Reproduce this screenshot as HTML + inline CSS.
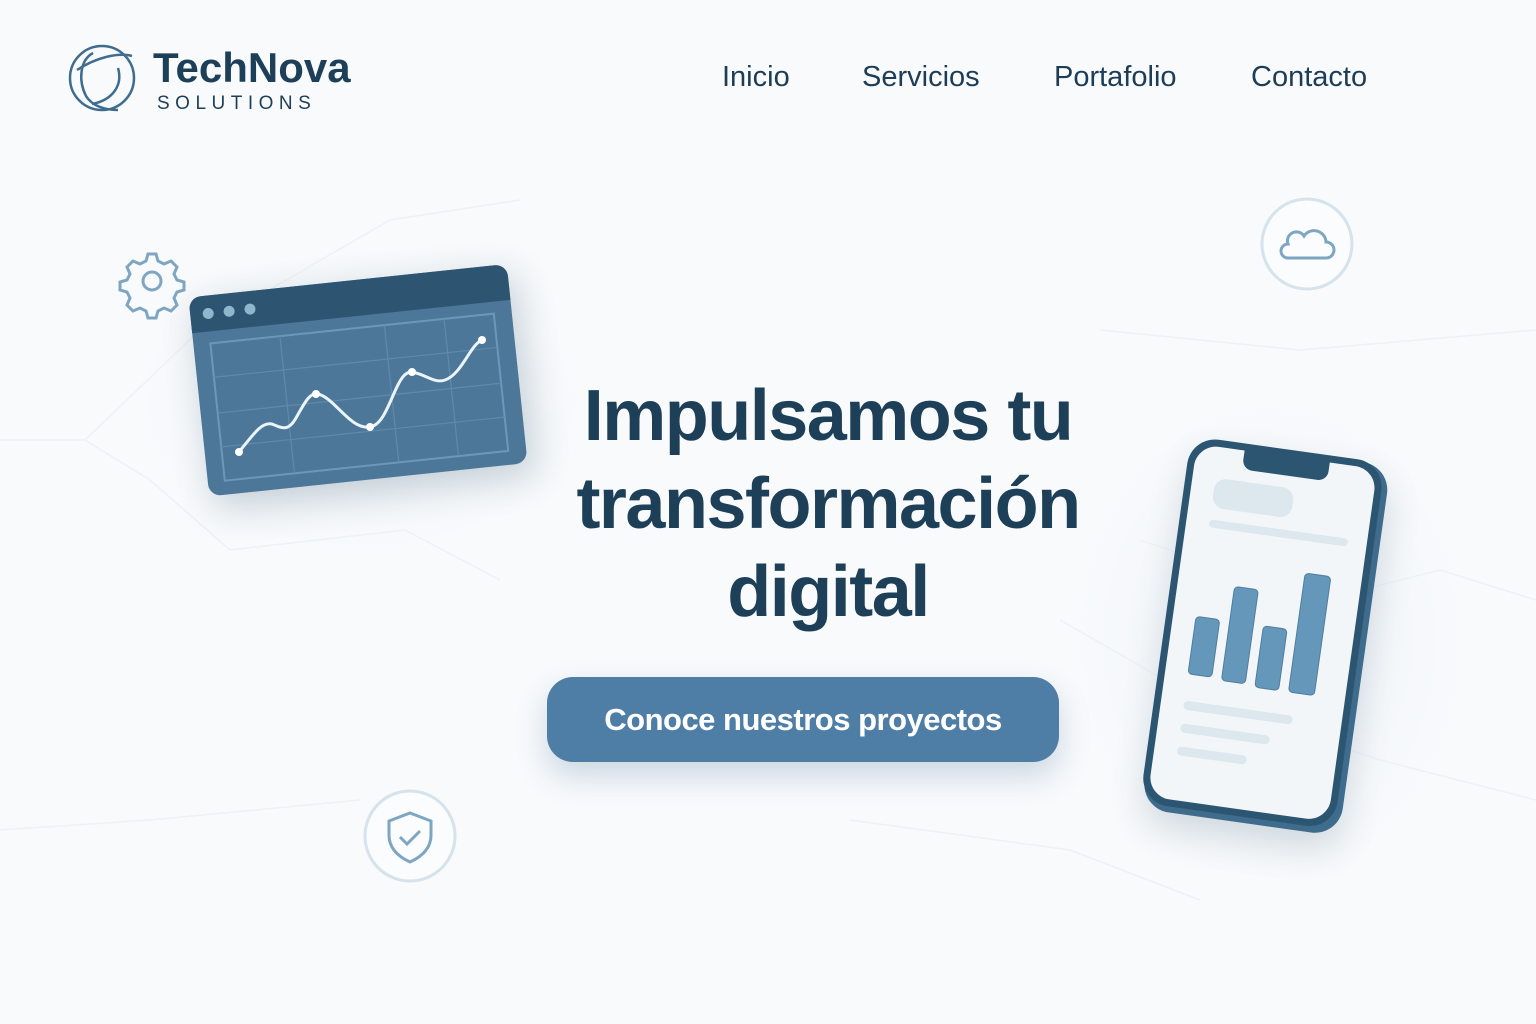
<!DOCTYPE html>
<html><head><meta charset="utf-8"><style>
html,body{margin:0;padding:0}
body{width:1536px;height:1024px;position:relative;overflow:hidden;background:#f8fafc;font-family:"Liberation Sans",sans-serif;color:#1d3d57}
svg.bg{position:absolute;left:0;top:0}
.nav{position:absolute;top:61px;font-size:29px;color:#1d3d57}
.logo1{position:absolute;left:153px;top:44px;font-size:42px;font-weight:bold;letter-spacing:0px;color:#1e3f58}
.logo2{position:absolute;left:157px;top:93px;font-size:19px;letter-spacing:5.5px;color:#1e3f58}
h1{position:absolute;left:500px;width:656px;top:372px;margin:0;text-align:center;font-size:72px;line-height:88px;font-weight:bold;color:#1e3f58;letter-spacing:-1.5px}
.btn{position:absolute;left:547px;top:677px;width:512px;height:85px;border-radius:26px;background:#4e7ea6;color:#fff;font-size:31px;font-weight:bold;letter-spacing:-0.5px;line-height:85px;text-align:center;box-shadow:0 14px 30px rgba(70,110,150,.25)}
</style></head><body>
<svg class="bg" width="1536" height="1024">
<defs>
<radialGradient id="g" cx="50%" cy="50%" r="50%"><stop offset="0" stop-color="#e6eef4"/><stop offset="1" stop-color="#f8fafc" stop-opacity="0"/></radialGradient>
<filter id="b" x="-50%" y="-50%" width="200%" height="200%"><feGaussianBlur stdDeviation="18"/></filter>
</defs>
<ellipse cx="360" cy="400" rx="260" ry="180" fill="url(#g)"/>
<ellipse cx="1270" cy="640" rx="230" ry="280" fill="url(#g)"/>
<g stroke="#edf2f6" stroke-width="1.5" fill="none">
<path d="M0 440 L85 440 L150 480 L230 550 L405 530 L500 580"/>
<path d="M85 440 L200 330 L390 220 L520 200"/>
<path d="M1100 330 L1300 350 L1536 330"/>
<path d="M1140 540 L1320 600 L1440 570 L1536 600"/>
<path d="M1060 620 L1200 700 L1380 760 L1536 800"/>
<path d="M0 830 L150 820 L360 800"/>
<path d="M850 820 L1070 850 L1200 900"/>
</g>
<!-- window -->
<g transform="translate(360,380) rotate(-6)">
<rect x="-158" y="-90" width="324" height="204" rx="12" fill="#21455f" opacity=".22" filter="url(#b)"/>
<rect x="-162" y="-100" width="320" height="200" rx="12" fill="#4c7799"/>
<path d="M-162 -88 a12 12 0 0 1 12 -12 h296 a12 12 0 0 1 12 12 v24 h-320z" fill="#2d5572"/>
<circle cx="-144" cy="-82" r="5.5" fill="#8fb6cd"/><circle cx="-123" cy="-82" r="5.5" fill="#8fb6cd"/><circle cx="-102" cy="-82" r="5.5" fill="#8fb6cd"/>
<rect x="-145" y="-52" width="285" height="138" fill="none" stroke="#6d97b6" stroke-width="2"/>
<g stroke="#5f8aab" stroke-width="1.2"><line x1="-145" y1="-18" x2="140" y2="-18"/><line x1="-145" y1="18" x2="140" y2="18"/><line x1="-145" y1="52" x2="140" y2="52"/><line x1="-75" y1="-52" x2="-75" y2="86"/><line x1="30" y1="-52" x2="30" y2="86"/><line x1="90" y1="-52" x2="90" y2="86"/></g>
</g>
<path d="M239 452 C255 432 262 422 272 424 C282 428 288 432 296 418 C305 402 310 392 318 394 C335 398 350 430 370 427 C390 424 395 370 412 372 C425 374 435 384 445 380 C462 374 470 345 482 340" fill="none" stroke="#eaf4fb" stroke-width="3"/>
<g fill="#fff"><circle cx="239" cy="452" r="4"/><circle cx="316" cy="394" r="4"/><circle cx="370" cy="427" r="4"/><circle cx="412" cy="372" r="4"/><circle cx="482" cy="340" r="4"/></g>
<!-- gear -->
<g transform="translate(152,281)" fill="none" stroke="#7ea6c2" stroke-width="3">
<path d="M-4 -27 h8 l2 7 l6 3 l7 -3 l6 6 l-3 7 l3 6 l7 2 v8 l-7 2 l-3 6 l3 7 l-6 6 l-7 -3 l-6 3 l-2 7 h-8 l-2 -7 l-6 -3 l-7 3 l-6 -6 l3 -7 l-3 -6 l-7 -2 v-8 l7 -2 l3 -6 l-3 -7 l6 -6 l7 3 l6 -3z"/>
<circle r="9"/></g>
<!-- cloud -->
<circle cx="1307" cy="244" r="45" fill="#fafcfd" stroke="#d5e3ec" stroke-width="3"/>
<path d="M1288 258 h38 a8 8 0 0 0 0 -16 a12 12 0 0 0 -22 -6 a9 9 0 0 0 -16 8 a7 7 0 0 0 0 14z" fill="none" stroke="#7ea6c2" stroke-width="3"/>
<!-- shield -->
<circle cx="410" cy="836" r="45" fill="#fafcfd" stroke="#d5e3ec" stroke-width="3"/>
<path d="M410 813 l21 8 v14 c0 14 -10 22 -21 27 c-11 -5 -21 -13 -21 -27 v-14z" fill="none" stroke="#7ea6c2" stroke-width="3"/>
<path d="M400 837 l7 7 l13 -13" fill="none" stroke="#7ea6c2" stroke-width="3"/>
<!-- phone -->
<g transform="translate(1264,636) rotate(8)">
<rect x="-96" y="-170" width="200" height="374" rx="28" fill="#21455f" opacity=".18" filter="url(#b)"/>
<rect x="-98" y="-186" width="200" height="374" rx="28" fill="#3f6b8c"/>
<rect x="-100" y="-188" width="196" height="370" rx="28" fill="#2c5572"/>
<rect x="-93" y="-181" width="182" height="356" rx="22" fill="#f3f6f8"/>
<path d="M-45 -182 h86 v10 a10 10 0 0 1 -10 10 h-66 a10 10 0 0 1 -10 -10z" fill="#2c5572"/>
<rect x="-70" y="-150" width="80" height="30" rx="12" fill="#dde7ee"/>
<rect x="-70" y="-108" width="140" height="8" rx="4" fill="#dde7ee"/>
<g fill="#6497ba" stroke="#4f7ea0"><rect x="-70" y="-10" width="24" height="58" rx="4"/><rect x="-36" y="-45" width="24" height="95" rx="4"/><rect x="-2" y="-10" width="24" height="62" rx="4"/><rect x="32" y="-68" width="26" height="120" rx="4"/></g>
<rect x="-70" y="75" width="110" height="9" rx="4.5" fill="#dde7ee"/>
<rect x="-70" y="98" width="90" height="9" rx="4.5" fill="#dde7ee"/>
<rect x="-70" y="121" width="70" height="9" rx="4.5" fill="#dde7ee"/>
</g>
<!-- logo globe -->
<g fill="none" stroke="#3f6d8f" stroke-width="2.5">
<circle cx="102" cy="78" r="32"/>
<path d="M77 70 C95 58 118 52 132 56"/>
<path d="M93 53 C80 60 78 80 86 96 C92 106 105 110 118 110"/>
<path d="M118 68 C123 85 113 100 92 104"/>
</g>
</svg>
<div class="logo1">TechNova</div>
<div class="logo2">SOLUTIONS</div>
<div class="nav" style="left:722px">Inicio</div>
<div class="nav" style="left:862px">Servicios</div>
<div class="nav" style="left:1054px">Portafolio</div>
<div class="nav" style="left:1251px">Contacto</div>
<h1>Impulsamos tu transformación digital</h1>
<div class="btn">Conoce nuestros proyectos</div>
</body></html>
